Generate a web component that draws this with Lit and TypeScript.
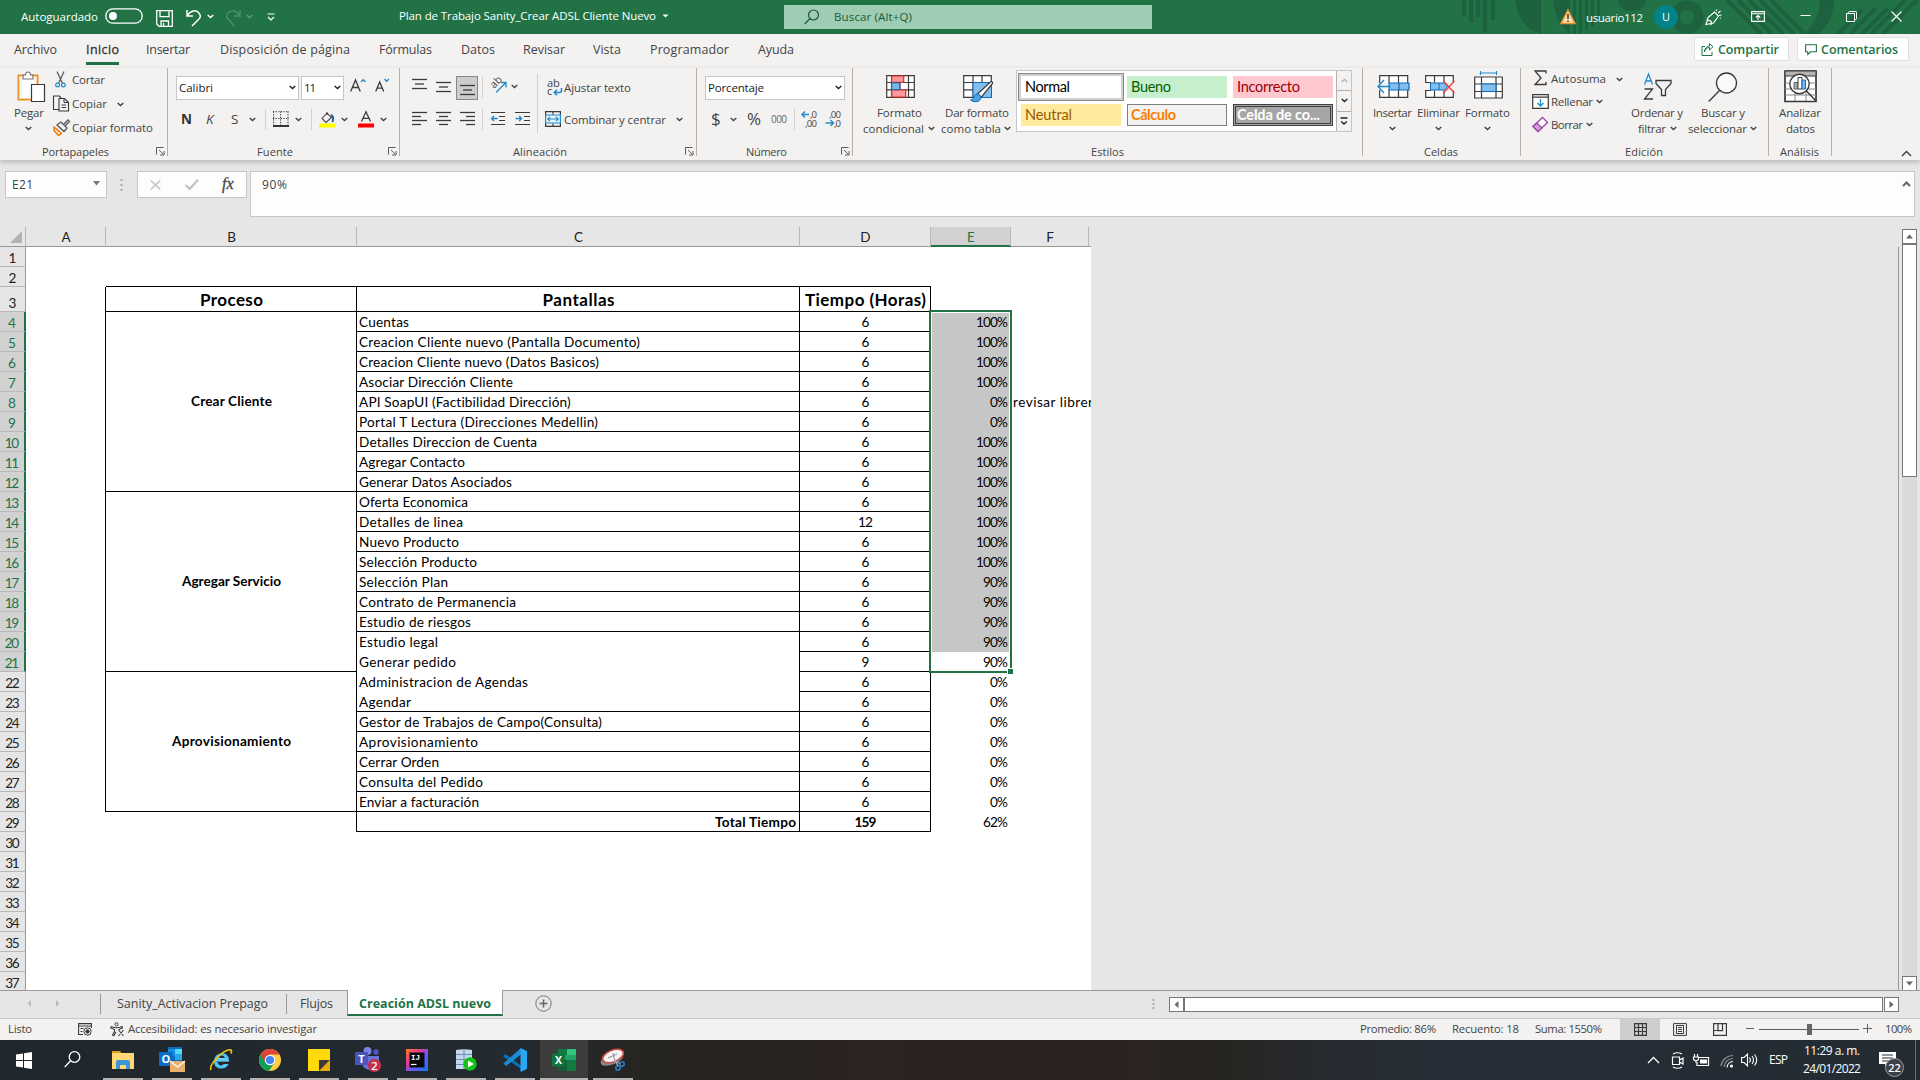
import { LitElement, html, svg, css, nothing, TemplateResult } from "lit";
import { customElement, property } from "lit/decorators.js";

/* Text label that adjusts its tracking so that it fills a given width. */
@customElement("fit-label")
class FitLabel extends LitElement {
  @property({ type: Number }) w = 0;
  @property() text = "";
  static styles = css`
    :host { display: inline-block; white-space: pre; flex: none; }
    .ink { display: inline-block; }
  `;
  render() {
    return html`<span class="ink">${this.text}</span>`;
  }
  updated() {
    const ink = this.renderRoot.querySelector(".ink") as HTMLElement;
    if (!this.w) return;
    this.style.width = this.w + "px";
    ink.style.letterSpacing = "0";
    const natural = ink.getBoundingClientRect().width;
    const n = Math.max(1, this.text.length - 1);
    ink.style.letterSpacing = ((this.w - natural) / n).toFixed(3) + "px";
  }
}

type Item = [x: number, w: number, content: unknown, dy?: number];

const t = (text: string, w = 0, cls = "") => html`<fit-label class=${cls} .text=${text} .w=${w}></fit-label>`;

/* One horizontal run of controls; every item starts at its own x. */
const row = (origin: number, h: number, items: Item[], cls = "") => {
  let at = origin;
  return html`<div class="row ${cls}" style="height:${h}px">
    ${items.map(([x, w, content, dy]) => {
      const gap = x - at;
      at = x + w;
      return html`<div class="slot" style="margin-left:${gap}px;width:${w}px;${dy ? `margin-top:${dy * 2}px` : ""}">${content}</div>`;
    })}
  </div>`;
};

const ic = (w: number, h: number, body: TemplateResult<2>) =>
  html`<svg class="ic" width=${w} height=${h} viewBox="0 0 ${w} ${h}" fill="none" stroke="#3b3a39">${body}</svg>`;

const chev = (c = "#444") => ic(7, 5, svg`<path d="M.7 1l2.8 2.6L6.3 1" stroke=${c} stroke-width="1.4"/>`);
const launcher = ic(9, 9, svg`<path d="M.5 7.5v-7h7M3 3l4.5 4.5M8 4v4H4" stroke="#605e5c"/>`);
const vsep = (h: number) => html`<div class="vsep" style="height:${h}px"></div>`;
const lines = (xs: [number, number][], gap: number) =>
  ic(15, 15, svg`${xs.map(([a, b], i) => svg`<path d="M${a} ${1.5 + i * gap}H${b}" stroke-width="1.3"/>`)}`);
const sans = "Open Sans, sans-serif";

const I = {
  toggle: ic(38, 16, svg`<rect x=".8" y=".8" width="36.4" height="14.4" rx="7.2" stroke="#fff" stroke-width="1.3"/><circle cx="8" cy="8" r="4" fill="#fff" stroke="none"/>`),
  save: ic(17, 17, svg`<path d="M.7.7h15.6v15.6H3L.7 14zM4 .7v6h9v-6M5 16v-5h7.5v5M7.500 16v-3" stroke="#fff" stroke-width="1.3"/>`),
  undo: ic(16, 18, svg`<path d="M1 1v6h6M1.3 6.5C5 1 10 .8 12.500 3.500c2.500 2.700 2 5 .5 6.500L6 17" stroke="#fff" stroke-width="1.5"/>`),
  redo: ic(16, 18, svg`<path d="M15 1v6H9M14.700 6.500C11 1 6 .8 3.500 3.500 1 6.200 1.500 8.500 3 10l6.500 7" stroke="#5c9a78" stroke-width="1.300" opacity=".75"/>`),
  quick: ic(8, 8, svg`<path d="M.5 1h7M1 4l3 3 3-3" stroke="#fff" stroke-width="1.200"/>`),
  caret: ic(7, 4, svg`<path d="M.5.500h6l-3 3z" fill="#fff" stroke="none"/>`),
  find: ic(16, 16, svg`<circle cx="9.500" cy="6" r="5" stroke="#185c37" stroke-width="1.200"/><path d="M6 9.500L.7 15" stroke="#185c37" stroke-width="1.200"/>`),
  warn: ic(16, 16, svg`<path d="M8 1l7 13.500H1z" fill="#ffe0a8" stroke="#e8912d" stroke-width="1.500"/><path d="M8 5v5M8 11.500v1.500" stroke="#333" stroke-width="1.500"/>`),
  pen: ic(17, 17, svg`<path d="M1 15.500l2-7L9.500 3l4 4-5 7zM1.500 12.500c3-3 7 1 4 3.500M11 2l1-1.500M13 4l2.500-2M14 6.500l2.500-.5M15 9h1" stroke="#fff" stroke-width="1.200"/>`),
  ribbonOpt: ic(14, 11, svg`<path d="M.6.600h12.800v9.800H.600zM.6 2.800h12.800M7 9V4.500M4.800 6.500L7 4.400l2.200 2.100" stroke="#fff" stroke-width="1.100"/>`),
  min: ic(11, 11, svg`<path d="M.5 4.500h10" stroke="#fff"/>`),
  restore: ic(11, 11, svg`<path d="M.5 2.500h8v8h-8zM2.500 2.500v-1q0-1 1-1h6q1 0 1 1v6q0 1-1 1h-1" stroke="#fff"/>`),
  close: ic(11, 11, svg`<path d="M.5.500l10 10M10.500.500l-10 10" stroke="#fff" stroke-width="1.100"/>`),
  share: ic(13, 13, svg`<path d="M4 3.500H1v9h10V9M3.500 9c.5-3 2.500-4.500 5-4.500V7L12 3.700 8.500.700V3C5.500 3.200 3.500 5.500 3.500 9z" stroke="#217346"/>`),
  comment: ic(12, 12, svg`<path d="M.6.800h10.800v7H5.500L2.800 10.500V7.800H.600z" stroke="#217346" stroke-width="1.100"/>`),

  paste: ic(28, 32, svg`<path d="M1.500 4.500h19v24h-19z" fill="#fbf3e6" stroke="#e8912d" stroke-width="2"/><path d="M2.500 5.500h17v22h-17z" stroke="#fbd9a5"/><path d="M5 6.500h12V27H5z" fill="#fff" stroke="none"/><path d="M6 8V4h2.500c0-4 5-4 5 0H16v4z" fill="#fff" stroke="#777" stroke-width="1.200"/><path d="M14.500 13.500h13v17h-13z" fill="#fff" stroke-width="1.200"/>`),
  cut: ic(11, 17, svg`<path d="M2 .500l5.500 12M9 .500l-5.500 12" stroke="#605e5c" stroke-width="1.300"/><circle cx="2.600" cy="14" r="1.900" stroke="#1e8bcd" stroke-width="1.200"/><circle cx="8.400" cy="14" r="1.900" stroke="#1e8bcd" stroke-width="1.200"/>`),
  copy: ic(17, 17, svg`<path d="M5.500 14.500h-5V1h5.800l2 2M6 3.500h5.500l4 4V16H6z" stroke-width="1.100"/><path d="M11 3.500v4h4.500M8.500 10h4.500M8.500 12.500h4.500"/>`),
  painter: ic(17, 17, svg`<path d="M1 8l7.500 6.500L5.500 16.500 1 11.500z" fill="#fde8cf" stroke="#e8760c" stroke-width="1.400"/><path d="M4 6l4-3 6 6-3 3.500zM11 5l4-4 1.500 1.500-4 4" fill="#f3f2f1" stroke="#555" stroke-width="1.300"/>`),
  growA: ic(16, 15, svg`<path d="M.7 13.500L5.500 2l4.800 11.500M2.300 9.500h6.400" stroke-width="1.300"/><path d="M11 4l2.200-2.300L15.400 4" stroke="#1e8bcd" stroke-width="1.300"/>`),
  shrinkA: ic(15, 15, svg`<path d="M.7 13.500L4.700 4l4 9.500M2 10.200h5.400" stroke-width="1.300"/><path d="M9.500 1l2.200 2.300L13.900 1" stroke="#1e8bcd" stroke-width="1.300"/>`),
  borders: ic(16, 16, svg`<path d="M.6.500v14M7.600.500v14M15 .500v14M0 .700h16M0 7.500h16" stroke-dasharray="1.300 1.300"/><path d="M0 15h16" stroke-width="1.800" stroke="#222"/>`),
  fill: ic(17, 17, svg`<path d="M3 7.500L8 2l4.500 4.500-5.500 5zM8 4V1" stroke="#444" stroke-width="1.100" fill="#f3f2f1"/><path d="M12 4c2 1 2.500 4 1.500 7" stroke="#1e5fa8" stroke-width="2"/><path d="M0 12.500h16v4H0z" fill="#ff0" stroke="none"/>`),
  fontColor: ic(17, 17, svg`<path d="M3.500 10.500L8 .7l4.500 9.800M5 7.300h6" stroke-width="1.300"/><path d="M0 12.500h16v4H0z" fill="#f00" stroke="none"/>`),
  orient: ic(18, 17, svg`<path d="M6 15.500l9.500-9.500M11 5.500h5v5" stroke="#1e8bcd" stroke-width="1.300"/><text transform="translate(4 12) rotate(-45)" font-size="10.500" fill="#444" stroke="none" font-family=${sans}>ab</text>`),
  wrap: html`<span class="abc"><span>ab</span><span>c</span>${ic(10, 9, svg`<path d="M8.500 0v2.500q0 2-2 2H1.500M4 1.800L1.300 4.500 4 7.200" stroke="#1e8bcd" stroke-width="1.600"/>`)}</span>`,
  merge: ic(16, 16, svg`<path d="M.6.600h14.800v14.800H.600zM8 .600v3M8 12.400v3" stroke-width="1.200"/><path d="M.6 4h14.800v8H.600z" stroke="#1e8bcd" fill="#e8f3fb" stroke-width="1.200"/><path d="M2.500 8h11M5 5.800L2.800 8 5 10.200M11 5.800L13.200 8 11 10.200" stroke="#1e8bcd" stroke-width="1.200"/>`),
  outdent: ic(16, 15, svg`<path d="M0 1.500h14M8 5.500h6M8 9.500h6M0 13.500h14" stroke-width="1.200"/><path d="M.7 7.500h6M3 5L.7 7.500 3 10" stroke="#1e8bcd" stroke-width="1.400"/>`),
  indent: ic(16, 15, svg`<path d="M0 1.500h15M9 5.500h6M9 9.500h6M0 13.500h15" stroke-width="1.200"/><path d="M.5 7.500h6M4.200 5l2.300 2.500L4.200 10" stroke="#1e8bcd" stroke-width="1.400"/>`),
  incDec: ic(17, 17, svg`<path d="M1 4.500h7M4 1.500L1 4.500l3 3" stroke="#1e8bcd" stroke-width="1.400"/><text x="16" y="8" font-size="9.500" fill="#444" stroke="none" text-anchor="end" textLength="7" font-family=${sans}>,0</text><text x="16" y="16.500" font-size="9.500" fill="#444" stroke="none" text-anchor="end" textLength="12" font-family=${sans}>,00</text>`),
  decDec: ic(17, 17, svg`<path d="M.5 13h8M5.500 10l3 3-3 3" stroke="#1e8bcd" stroke-width="1.400"/><text x="16" y="8" font-size="9.500" fill="#444" stroke="none" text-anchor="end" textLength="12" font-family=${sans}>,00</text><text x="16" y="16.500" font-size="9.500" fill="#444" stroke="none" text-anchor="end" textLength="7" font-family=${sans}>,0</text>`),

  cond: ic(29, 23, svg`<path d="M.7.700h27.600v21.600H.700zM.7 7.500h27.600M.7 14.800h27.600M5.500.700v21.600M14 .700v21.600M22.500.700v21.600" fill="#fff" stroke-width="1.200"/><path d="M5.700 1h12v6.400h-12zM5.700 15h14v7h-14z" fill="#ff9a9a" stroke="#d92b2b" stroke-width="1.200"/><path d="M5.700 8h8v6.500h-8z" fill="#7ab8ea" stroke="#0f6cbd"/>`),
  tableFmt: ic(31, 28, svg`<path d="M.7.700h27.600v21.600H.700zM.7 7.500h27.600M.7 14.800h27.600M10 .700v21.600M19 .700v21.600" fill="#fff" stroke-width="1.200"/><path d="M10 7.500h18.500v15H10z" fill="#83beec" stroke="#0f6cbd"/><path d="M14.500 19L28 6.500q2 0 1.500 2L18.500 22z" fill="#fff" stroke-width="1.200"/><path d="M7.500 25c4 0 3-6 7-6s5 7-1 7.700q-4 .3-6-1.700z" fill="#4da3e0" stroke="#0f6cbd"/>`),
  insert: ic(33, 23, svg`<path d="M2.700.700h28v21.600h-28zM12 .700v21.600M21.500.700v21.600" fill="#fff" stroke-width="1.200"/><path d="M0 8h34v7H0z" fill="#f3f2f1" stroke="none"/><path d="M12 8h20v7H12zM22 8v7" fill="#83beec" stroke="#0f6cbd" stroke-width="1.200"/><path d="M13.500 11.500H1.500M7 5l-6 6.500L7 18" stroke="#1e8bcd" stroke-width="1.400"/>`),
  remove: ic(31, 23, svg`<path d="M.7.700h27.600v21.600H.700zM9.500.700v21.600M19 .700v21.600" fill="#fff" stroke-width="1.200"/><path d="M0 7.500h31v8H0z" fill="#f3f2f1" stroke="none"/><path d="M0 7.500h6M0 15.500h6"/><path d="M5.500 8h14l3 3.500-3 3.500h-14zM14 8v7" fill="#83beec" stroke="#0f6cbd"/><path d="M18.500 6l11 12M29.500 6l-11 12" stroke="#e8484a" stroke-width="1.400"/>`),
  format: ic(29, 28, svg`<path d="M.7 6h27.600v21H.700zM.7 13h27.600M.7 20.500h27.600M7.500 6v21M22 6v21" fill="#fff" stroke-width="1.200"/><path d="M7.500 13H22v7.500H7.500z" fill="#83beec" stroke="#0f6cbd" stroke-width="1.200"/><path d="M6.500 0v4M22.500 0v4M6.500 2h16" stroke="#1e8bcd" stroke-width="1.200"/>`),
  sigma: ic(13, 16, svg`<path d="M12 3.500V1H1l6 7-6 6.500h11V12" stroke-width="1.300"/>`),
  fillDown: ic(17, 15, svg`<path d="M.7.700h15.600v13.600H.700zM.7 3.200h15.600" stroke-width="1.200" fill="#fff"/><path d="M8.500 5v7M5.500 9l3 3 3-3" stroke="#1e8bcd" stroke-width="1.300"/>`),
  eraser: ic(17, 17, svg`<path d="M1 10.500L10.500 1.500l5 5L6 15.500z" fill="#fff" stroke="#9b45a8" stroke-width="1.300"/><path d="M1 10.500L5 7l5 5-4 3.500z" fill="#d69cdc" stroke="#9b45a8" stroke-width="1.200"/>`),
  sort: ic(30, 28, svg`<path d="M1.500 11.500L5.500 1l4 10.500M2.800 8h5.400" stroke="#1e8bcd" stroke-width="1.300"/><path d="M1.500 16h8l-8 10h8.500M13 7.500h15v3l-5.500 6v6h-4v-6l-5.500-6z" stroke-width="1.300"/>`),
  search: ic(30, 30, svg`<circle cx="18.500" cy="11" r="10" stroke-width="1.300" fill="#f9f9f9"/><path d="M11.500 18.500L.7 29.500" stroke-width="1.300"/>`),
  analyze: ic(33, 33, svg`<path d="M1 1h31v30.500H1z" fill="#fff" stroke-width="1.700"/><path d="M1 1h31v5H1z" fill="#b5b3b1"/><path d="M1 13h31M1 19h31M1 25h31M11 6v25M22 6v25" stroke="#888"/><circle cx="15.500" cy="14" r="9.700" fill="#fff" stroke-width="1.400"/><path d="M10 12.500h4V19h-4z" fill="#aaa" stroke="#666"/><path d="M14 7.500h4V19h-4z" fill="#fff"/><path d="M18 10h3.500v9H18z" fill="#7ab8ea" stroke="#0f6cbd"/><path d="M22.500 21l9.500 10" stroke-width="1.500"/>`),
  up: ic(11, 7, svg`<path d="M1 6l4.500-4.500L10 6" stroke-width="1.400"/>`),
};

const tri = (d: string, c = "#666") => ic(9, 9, svg`<path d=${d} fill=${c} stroke="none"/>`);

interface SheetRow { n: number; name: string; w: number; hours: string; pct: string; open?: boolean }
const raw: [string, number, string, string, boolean?][] = [
  ["Cuentas", 50, "6", "100%"],
  ["Creacion Cliente nuevo (Pantalla Documento)", 281, "6", "100%"],
  ["Creacion Cliente nuevo (Datos Basicos)", 240, "6", "100%"],
  ["Asociar Dirección Cliente", 154, "6", "100%"],
  ["API SoapUI (Factibilidad Dirección)", 212, "6", "0%"],
  ["Portal T Lectura (Direcciones Medellin)", 239, "6", "0%"],
  ["Detalles Direccion de Cuenta", 178, "6", "100%"],
  ["Agregar Contacto", 106, "6", "100%"],
  ["Generar Datos Asociados", 153, "6", "100%"],
  ["Oferta Economica", 109, "6", "100%"],
  ["Detalles de linea", 104, "12", "100%"],
  ["Nuevo Producto", 100, "6", "100%"],
  ["Selección Producto", 118, "6", "100%"],
  ["Selección Plan", 89, "6", "90%"],
  ["Contrato de Permanencia", 157, "6", "90%"],
  ["Estudio de riesgos", 112, "6", "90%"],
  ["Estudio legal", 79, "6", "90%", true],
  ["Generar pedido", 97, "9", "90%", true],
  ["Administracion de Agendas", 169, "6", "0%", true],
  ["Agendar", 52, "6", "0%"],
  ["Gestor de Trabajos de Campo(Consulta)", 243, "6", "0%"],
  ["Aprovisionamiento", 119, "6", "0%"],
  ["Cerrar Orden", 80, "6", "0%"],
  ["Consulta del Pedido", 124, "6", "0%"],
  ["Enviar a facturación", 120, "6", "0%"],
];
const rows: SheetRow[] = raw.map(([name, w, hours, pct, open], i) => ({ n: i + 4, name, w, hours, pct, open }));
const pctW: Record<string, number> = { "100%": 32, "90%": 25, "0%": 18, "62%": 25 };

const place = (col: number, r: number, span = 1) => `grid-column:${col};grid-row:${r + 1} / span ${span}`;

@customElement("app-root")
class AppRoot extends LitElement {
  static styles = css`
    :host { display: block; width: 1920px; height: 1080px; overflow: hidden; background: #e6e6e6;
      font: 11.500px/16px "Open Sans", "Noto Sans", sans-serif; color: #444; }
    * { box-sizing: border-box; }
    .row { display: flex; align-items: center; flex: none; }
    .slot { flex: none; display: flex; align-items: center; white-space: nowrap; }
    .ic { display: block; flex: none; overflow: visible; }
    .b { font-weight: 700; }

    .title { position: relative; background: #217346; color: #fff; height: 34px; }
    .art { position: absolute; right: 0; top: 0; }
    .title > .row { position: relative; }
    .searchbox { background: #9fcdb4; width: 368px; height: 24px; color: #185c37; }
    .avatar { width: 24px; height: 24px; border-radius: 50%; background: #038387; color: #fff; font-size: 11px;
      display: flex; align-items: center; justify-content: center; }

    .tabs { background: #f3f2f1; height: 34px; font-size: 12.500px; }
    .tab-on { border-bottom: 3px solid #217346; height: 26px; padding-top: 3px; color: #333; margin-top: 2px; -webkit-text-stroke: .3px; }
    .pill { background: #fff; border: 1px solid #e1dfdd; border-radius: 2px; height: 24px; width: 100%; color: #217346; font-weight: 600; padding-top: 1px; }

    .ribbon { display: flex; background: #f3f2f1; height: 92px; position: relative; box-shadow: 0 2px 5px #00000038; }
    .group { flex: none; height: 88px; display: flex; flex-direction: column; border-right: 1px solid #b3b0ad; }
    .group .body { flex: none; height: 76px; }
    .group .foot { height: 12px; line-height: 14px; font-size: 11px; }
    .split { display: flex; }
    .stack { display: flex; flex-direction: column; flex: none; }
    .pad8 { padding-top: 7px; }
    .gap7 { margin-top: 7px; }
    .vsep { width: 1px; background: #d2d0ce; }
    .box { background: #fff; border: 1px solid #c8c6c4; height: 24px; width: 100%; color: #222; }
    .pressed { width: 22px; height: 24px; background: #cfcdcb; border: 1px solid #8a8886; display: flex; align-items: flex-end; justify-content: center; }
    .n { font-weight: 700; font-size: 13.500px; color: #333; }
    .k { font-style: italic; font-size: 13.500px; }
    .s { text-decoration: underline; font-size: 13.500px; }
    .sym { font-size: 17px; line-height: 20px; }
    .zeros { font-size: 10px; color: #666; }
    .abc { position: relative; display: flex; flex-direction: column; width: 15px; height: 17px; font-size: 11px; line-height: 8px; }
    .abc .ic { position: absolute; left: 6px; top: 9px; }

    .gallery { display: flex; width: 336px; height: 62px; border: 1px solid #c8c6c4; background: #fff; }
    .styles { display: grid; grid-template-columns: 100px 100px 100px; column-gap: 6px; row-gap: 6px; padding: 5px 0 0 4px; width: 320px; grid-auto-rows: 22px;
      font: 14.500px/20px "Lato", sans-serif; }
    .style { padding: 0 0 1px 4px; display: flex; align-items: center; }
    .normal { outline: 1px solid #8a8886; outline-offset: 2px; box-shadow: 0 0 0 2px #d2d0ce; color: #000; }
    .bueno { background: #c6efce; color: #006100; }
    .incorrecto { background: #ffc7ce; color: #9c0006; }
    .neutral { background: #ffeb9c; color: #9c5700; }
    .calculo { background: #f2f2f2; border: 1px solid #7f7f7f; color: #fa7d00; font-weight: 700; padding-left: 3px; }
    .celda { background: #a5a5a5; border: 3px double #3f3f3f; color: #fff; font-weight: 700; padding-left: 1px; }
    .spin { display: flex; flex-direction: column; width: 15px; border-left: 1px solid #b3b0ad; background: #f3f2f1; }
    .spin div { display: flex; align-items: center; justify-content: center; flex: 1; border-bottom: 1px solid #b3b0ad; }
    .spin div:last-child { border: 0; }

    .formula { height: 67px; padding-top: 11px; font-size: 12px; }
    .fbox { background: #fdfdfd; border: 1px solid #c6c6c6; width: 100%; height: 27px; }
    .formula > .row { align-items: flex-start; }
    .fx { font: italic 400 16px/16px "Liberation Serif", serif; color: #444; -webkit-text-stroke: .3px; }
    .tall { height: 46px; }

    .work { display: flex; height: 763px; }
    .sheet { position: relative; flex: none; width: 1091px; height: 763px; overflow: hidden; background: #fff; display: grid;
      grid-template-columns: 26px 80px 251px 443px 131px 80px 78px 2px;
      grid-template-rows: 20px 20px 20px 25px repeat(34, 20px);
      font: 13.600px/20px "Lato", "Open Sans", sans-serif; color: #000; }
    .hd { background: #e6e6e6; border-bottom: 1px solid #999; border-right: 1px solid #b8b8b8; display: flex; justify-content: center; color: #222; line-height: 20px; padding-left: 1px; font-size: 13.500px; }
    .hd.plain { border-right: 0; }
    .hd.on { background: #d2d2d2; color: #217346; border-bottom: 2px solid #217346; }
    .hd.corner { justify-content: flex-end; align-items: flex-end; padding: 0 3px 3px 0; }
    .rh { background: #e6e6e6; border-right: 1px solid #999; border-bottom: 1px solid #b8b8b8; display: flex; align-items: flex-end; justify-content: center; color: #222; }
    .rh fit-label { margin-bottom: -2px; }
    .rh.on { background: #d2d2d2; color: #217346; border-right: 2px solid #217346; }
    .cell { display: flex; white-space: nowrap; min-width: 0; }
    .mid { justify-content: center; padding-left: 1px; }
    .tallcell { align-items: center; padding-bottom: 2px; }
    .end { justify-content: flex-end; padding-right: 3px; }
    .start { padding-left: 2px; }
    .br { border-right: 1px solid #000; }
    .bb { border-bottom: 1px solid #000; }
    .grey { background: #c6c6c6; }
    .big { font-size: 17px; font-weight: 700; line-height: 26px; }
    .sel { position: absolute; left: 929px; top: 83px; width: 83px; height: 363px; border: 2px solid #217346; box-shadow: inset 0 0 0 1px #fff; }
    .knob { position: absolute; right: -4px; bottom: -4px; width: 7px; height: 7px; background: #217346; border: 1px solid #fff; }
    .void { flex: none; width: 808px; }
    .void .blank { height: 743px; margin-top: 20px; border-right: 1px solid #999; width: 808px; }
    .vbar { width: 21px; padding: 2px 3px 0 3px; display: flex; flex-direction: column; }
    .btn { background: #fff; border: 1px solid #777; width: 15px; height: 15px; display: flex; align-items: center; justify-content: center; flex: none; }
    .vthumb { background: #fff; border: 1px solid #777; width: 15px; height: 233px; flex: none; }
    .vtrack { background: #dadada; width: 15px; height: 499px; flex: none; }
    .vbar .btn:last-child { position: relative; }

    .sheets { height: 28px; border-top: 1px solid #999; font-size: 12.500px; position: relative; }
    .sheets > .row { margin-top: -1px; }
    .tabnow { width: 100%; height: 26px; background: #fff; border: 1px solid #999; border-top: 0; border-bottom: 2px solid #217346; margin-top: -1px;
      padding-top: 3px; display: flex; align-items: center; justify-content: center; color: #217346; font-weight: 700; }
    .hthumb { background: #fff; border: 1px solid #777; height: 15px; width: 100%; }

    .status { height: 22px; background: #f3f2f1; border-top: 1px solid #c6c6c6; font-size: 11.300px; }
    .status fit-label { margin-top: -2px; }
    .view { width: 40px; height: 21px; background: #cfcecd; display: flex; align-items: center; justify-content: center; padding-bottom: 1px; }
    .rail { position: relative; width: 100px; height: 1px; background: #605e5c; }
    .rail::after { content: ""; position: absolute; left: 48px; top: -5px; width: 5px; height: 11px; background: #666; }

    .taskbar { position: relative; height: 40px; color: #fff; font-size: 12px;
      background: linear-gradient(90deg, #1f272c 0, #232a30 520px, #26241f 660px, #2b2321 900px, #2b2322 1130px, #262420 1210px, #272b31 1340px, #252e36 1440px, #232c33 100%); }
    .app { height: 40px; width: 100%; display: flex; flex-direction: column; align-items: center; justify-content: space-between; }
    .app .pic { flex: 1; display: flex; align-items: center; padding-top: 2px; }
    .app.open::after { content: ""; width: 40px; height: 2px; background: #b5b3b1; }
    .app.now { background: #3c3c3b; }
    .app.now::after { width: 48px; }
    .clock { display: flex; flex-direction: column; line-height: 18px; align-items: center; width: 60px; }
    .edge { width: 1px; height: 40px; background: #6d7276; }
    .note { position: relative; width: 34px; height: 28px; }
    .count { position: absolute; left: 6px; top: 6px; width: 19px; height: 19px; border-radius: 50%; background: #3c4248; border: 1px solid #9a9da0;
      font-size: 11px; line-height: 17px; text-align: center; font-weight: 600; }
  `;

  private titleBar() {
    return html`<header class="title">
      <svg class="art" width="470" height="34" viewBox="1450 0 470 34" fill="#1e613f">
        <path d="M1462 0h4v16h-4zM1469 0h4v23h-4zM1476 0h4v17h-4zM1483 0h4v32h-4zM1491 0h4v20h-4zM1515 0h26v34q-22-6-26-34zM1573 0h3v34h-3zM1579 0h3v34h-3zM1585 0h3v30h-3zM1591 0h3v26h-3zM1597 0h3v22h-3z"/>
        <path d="M1553 0h17v34q-14-10-17-34zM1618 0h28q-2 11-14 11t-14-11z"/>
        <circle cx="1687" cy="17" r="12" fill="none" stroke="#1e613f" stroke-width="9"/>
        <path d="M1727 0l34 34M1738 0l34 34M1749 0l34 34M1760 0l34 34M1771 0l34 34M1862 10l-24 24M1876 8l-26 26M1888 8l-26 26M1905 0l-34 34M1917 0l-34 34" stroke="#1e613f" stroke-width="4"/>
        <path d="M1820 0h14q0 22-16 34h-15q16-12 17-34z"/>
      </svg>
      ${row(0, 34, [
        [21, 77, t("Autoguardado", 77)], [105, 38, I.toggle, -1], [156, 17, I.save, 1], [186, 16, I.undo, 1], [207, 7, chev("#fff"), -1],
        [225, 16, I.redo, 1], [246, 7, chev("#5c9a78"), -1], [267, 8, I.quick], [399, 257, t("Plan de Trabajo Sanity_Crear ADSL Cliente Nuevo", 257), -1], [662, 7, I.caret, -1],
        [784, 368, html`<div class="searchbox">${row(784, 24, [[804, 16, I.find], [834, 78, t("Buscar (Alt+Q)", 78)]])}</div>`],
        [1560, 16, I.warn], [1586, 57, t("usuario112", 57), 1], [1654, 24, html`<div class="avatar">U</div>`], [1705, 17, I.pen], [1751, 14, I.ribbonOpt, -1],
        [1800, 11, I.min, -1], [1846, 11, I.restore, -1], [1891, 11, I.close, -1],
      ])}
    </header>`;
  }

  private tabs() {
    return html`<nav class="tabs">${row(0, 31, [
      [14, 43, t("Archivo", 43)], [86, 33, html`<div class="tab-on">${t("Inicio", 33)}</div>`, 1], [146, 44, t("Insertar", 44)], [220, 130, t("Disposición de página", 130)],
      [379, 53, t("Fórmulas", 53)], [461, 34, t("Datos", 34)], [523, 42, t("Revisar", 42)], [593, 28, t("Vista", 28)], [650, 79, t("Programador", 79)], [758, 36, t("Ayuda", 36)],
      [1694, 95, html`<div class="pill">${row(1695, 22, [[1701, 13, I.share], [1718, 61, t("Compartir", 61)]])}</div>`, -1],
      [1797, 112, html`<div class="pill">${row(1798, 22, [[1805, 12, I.comment], [1821, 77, t("Comentarios", 77)]])}</div>`, -1],
    ])}</nav>`;
  }

  private group(x0: number, x1: number, body: unknown, foot: Item[]) {
    return html`<section class="group" style="width:${x1 - x0}px"><div class="body">${body}</div>${row(x0, 15, foot, "foot")}</section>`;
  }

  private ribbon() {
    const L = (x: number): Item => [x, 9, launcher];
    return html`<div class="ribbon">
      ${this.group(0, 168, html`<div class="split">
        <div class="stack" style="width:52px">
          ${row(0, 37, [[17, 28, I.paste]])}${row(0, 16, [[14, 30, t("Pegar", 30)]])}${row(0, 14, [[25, 7, chev()]])}
        </div>
        <div class="stack">
          ${row(52, 24, [[55, 11, I.cut, -1], [72, 33, t("Cortar", 33)]])}
          ${row(52, 24, [[53, 17, I.copy, -1], [72, 35, t("Copiar", 35)], [117, 7, chev()]])}
          ${row(52, 24, [[53, 17, I.painter, -1], [72, 81, t("Copiar formato", 81)]])}
        </div></div>`, [[42, 67, t("Portapapeles", 67)], L(156)])}
      ${this.group(168, 400, html`<div class="pad8">
        ${row(168, 25, [
          [176, 123, html`<div class="box">${row(177, 22, [[179, 34, t("Calibri", 34)], [289, 7, chev("#222")]])}</div>`],
          [301, 43, html`<div class="box">${row(302, 22, [[304, 13, t("11", 12)], [334, 7, chev("#222")]])}</div>`],
          [350, 16, I.growA, -2], [375, 15, I.shrinkA, -2]])}
        ${row(168, 25, [
          [181, 11, t("N", 0, "n"), -1], [206, 9, t("K", 0, "k"), -1], [231, 9, t("S", 0, "s"), -1], [249, 7, chev()], [265, 1, vsep(21)],
          [273, 16, I.borders, -1], [295, 7, chev()], [311, 1, vsep(21)], [319, 17, I.fill], [341, 7, chev()], [358, 17, I.fontColor], [380, 7, chev()]], "gap7")}
      </div>`, [[257, 36, t("Fuente", 36)], L(388)])}
      ${this.group(400, 697, html`<div class="split">
        <div class="stack pad8">
          ${row(400, 25, [
            [412, 15, lines([[0, 15], [3, 12], [0, 15]], 4.500), -2], [436, 15, lines([[0, 15], [3, 12], [0, 15]], 4.500), 1],
            [456, 22, html`<div class="pressed">${lines([[0, 15], [3, 12], [0, 15]], 4.500)}</div>`],
            [482, 1, vsep(21)], [490, 18, I.orient, -2], [511, 7, chev(), -1], [531, 1, nothing]])}
          ${row(400, 25, [
            [412, 15, lines([[0, 15], [0, 9], [0, 15], [0, 9]], 4), -1], [436, 15, lines([[0, 15], [3, 12], [0, 15], [3, 12]], 4), -1], [460, 15, lines([[0, 15], [6, 15], [0, 15], [6, 15]], 4), -1],
            [482, 1, vsep(21)], [491, 16, I.outdent, -1], [515, 16, I.indent, -1]], "gap7")}
        </div>
        <div class="stack" style="width:6px">${row(532, 70, [[537, 1, vsep(59)]])}</div>
        <div class="stack pad8">
          ${row(538, 25, [[547, 15, I.wrap], [564, 67, t("Ajustar texto", 67)]])}
          ${row(538, 25, [[545, 16, I.merge, -1], [564, 102, t("Combinar y centrar", 102)], [676, 7, chev()]], "gap7")}
        </div></div>`, [[513, 54, t("Alineación", 54)], L(685)])}
      ${this.group(697, 853, html`<div class="pad8">
        ${row(697, 25, [[705, 140, html`<div class="box">${row(706, 22, [[708, 56, t("Porcentaje", 56)], [835, 7, chev("#222")]])}</div>`]])}
        ${row(697, 25, [[711, 10, t("$", 9, "sym"), -1], [730, 7, chev()], [747, 16, t("%", 16, "sym"), -1], [771, 17, t("000", 16, "zeros"), -1], [794, 1, vsep(21)], [801, 17, I.incDec, -1], [825, 17, I.decDec, -1]], "gap7")}
      </div>`, [[746, 41, t("Número", 41)], L(841)])}
      ${this.group(853, 1363, html`<div class="split">
        <div class="stack" style="width:86px">${row(853, 37, [[886, 29, I.cond]])}${row(853, 16, [[877, 45, t("Formato", 45)]])}${row(853, 16, [[863, 62, t("condicional", 61)], [928, 7, chev(), -1]])}</div>
        <div class="stack" style="width:77px">${row(939, 37, [[963, 31, I.tableFmt, 2]])}${row(939, 16, [[945, 64, t("Dar formato", 64)]])}${row(939, 16, [[941, 60, t("como tabla", 60)], [1004, 7, chev(), -1]])}</div>
        <div class="stack" style="padding-top:2px">
          <div class="gallery"><div class="styles">
            <div class="style normal">${t("Normal", 45)}</div><div class="style bueno">${t("Bueno", 40)}</div><div class="style incorrecto">${t("Incorrecto", 63)}</div>
            <div class="style neutral">${t("Neutral", 47)}</div><div class="style calculo">${t("Cálculo", 45)}</div><div class="style celda">${t("Celda de co...", 83)}</div>
          </div><div class="spin"><div>${ic(7, 5, svg`<path d="M.7 4l2.800-2.600L6.300 4" stroke="#b3b0ad" stroke-width="1.300"/>`)}</div><div>${chev("#222")}</div>
            <div>${ic(8, 9, svg`<path d="M.5 1h7M1.200 4.500L4 7.100l2.800-2.600" stroke="#222" stroke-width="1.300"/>`)}</div></div></div>
        </div></div>`, [[1091, 33, t("Estilos", 33)]])}
      ${this.group(1363, 1521, html`
        ${row(1363, 37, [[1377, 33, I.insert], [1425, 31, I.remove], [1474, 29, I.format, -2]])}
        ${row(1363, 16, [[1373, 39, t("Insertar", 39)], [1417, 43, t("Eliminar", 43)], [1465, 45, t("Formato", 45)]])}
        ${row(1363, 15, [[1389, 7, chev()], [1435, 7, chev()], [1484, 7, chev()]])}`, [[1424, 34, t("Celdas", 34)]])}
      ${this.group(1521, 1769, html`<div class="split">
        <div class="stack" style="width:106px">
          ${row(1521, 22, [[1534, 13, I.sigma, -1], [1551, 55, t("Autosuma", 55)], [1616, 7, chev()]])}
          ${row(1521, 24, [[1532, 17, I.fillDown, -1], [1551, 42, t("Rellenar", 42)], [1596, 7, chev(), -1]])}
          ${row(1521, 22, [[1532, 17, I.eraser, -1], [1551, 32, t("Borrar", 32)], [1586, 7, chev(), -1]])}
        </div>
        <div class="stack" style="width:58px">${row(1627, 37, [[1643, 30, I.sort]])}${row(1627, 16, [[1631, 52, t("Ordenar y", 52)]])}${row(1627, 16, [[1638, 29, t("filtrar", 28)], [1670, 7, chev(), -1]])}</div>
        <div class="stack">${row(1685, 37, [[1708, 30, I.search]])}${row(1685, 16, [[1701, 44, t("Buscar y", 44)]])}${row(1685, 16, [[1688, 59, t("seleccionar", 59)], [1750, 7, chev(), -1]])}</div>
        </div>`, [[1625, 38, t("Edición", 38)]])}
      ${this.group(1769, 1832, html`
        ${row(1769, 37, [[1784, 33, I.analyze]])}${row(1769, 16, [[1779, 42, t("Analizar", 42)]])}${row(1769, 16, [[1786, 29, t("datos", 29)]])}`, [[1780, 39, t("Análisis", 39)]])}
      <div class="stack">${row(1832, 170, [[1901, 11, I.up]])}</div>
    </div>`;
  }

  private formulaBar() {
    return html`<div class="formula">${row(0, 46, [
      [5, 102, html`<div class="fbox">${row(6, 25, [[12, 21, t("E21", 21)], [92, 9, tri("M1 2h7L4.500 6.500z", "#777"), -1]])}</div>`],
      [120, 3, ic(3, 27, svg`<path d="M1.500 8v2M1.500 13v2M1.500 18v2" stroke="#aaa" stroke-width="2"/>`)],
      [137, 110, html`<div class="fbox">${row(138, 25, [
        [150, 11, ic(11, 10, svg`<path d="M.7.500l9.600 9M10.300.500L.7 9.500" stroke="#c2c2c2" stroke-width="1.600"/>`)],
        [185, 14, ic(14, 11, svg`<path d="M.7 6l4 4L13 .700" stroke="#c2c2c2" stroke-width="2.200"/>`)],
        [222, 14, html`<span class="fx">fx</span>`, -1]])}</div>`],
      [250, 1665, html`<div class="fbox tall">${row(251, 25, [[262, 25, t("90%", 25)], [1902, 9, ic(9, 6, svg`<path d="M1 5l3.500-3.500L8 5" stroke="#666" stroke-width="2"/>`), -1]])}</div>`],
    ])}</div>`;
  }

  private sheet() {
    const heads: [string, number][] = [["A", 2], ["B", 3], ["C", 4], ["D", 5], ["E", 6], ["F", 7]];
    const merged: [string, number, number, number][] = [["Crear Cliente", 4, 9, 81], ["Agregar Servicio", 13, 9, 99], ["Aprovisionamiento", 22, 7, 119]];
    return html`<div class="work">
      <div class="sheet">
        <div class="hd corner">${ic(12, 12, svg`<path d="M12 0v12H0z" fill="#b2b2b2" stroke="none"/>`)}</div>
        ${heads.map(([h, c]) => html`<div class="hd ${c === 6 ? "on" : ""}" style=${place(c, 0)}>${h}</div>`)}
        <div class="hd plain" style=${place(8, 0)}></div>
        ${Array.from({ length: 37 }, (_, i) => i + 1).map((n) => html`<div class="rh ${n > 3 && n < 22 ? "on" : ""}" style=${place(1, n)}>${t(String(n), n > 9 ? 14.500 : 0)}</div>`)}
        <div class="cell br" style=${place(2, 3, 26)}></div>
        <div class="cell bb" style="grid-column:3 / span 3;grid-row:3"></div>
        <div class="cell mid br bb big" style=${place(3, 3)}>${t("Proceso", 63)}</div>
        <div class="cell mid br bb big" style=${place(4, 3)}>${t("Pantallas", 72)}</div>
        <div class="cell mid br bb big" style=${place(5, 3)}>${t("Tiempo (Horas)", 121)}</div>
        ${merged.map(([name, r, span, w]) => html`<div class="cell mid tallcell br bb b" style=${place(3, r, span)}>${t(name, w)}</div>`)}
        ${rows.map((r) => html`
          <div class="cell start br ${r.open ? "" : "bb"}" style=${place(4, r.n)}>${t(r.name, r.w)}</div>
          <div class="cell mid br bb" style=${place(5, r.n)}>${t(r.hours, r.hours === "12" ? 15 : 0)}</div>
          <div class="cell end ${r.n < 21 ? "grey" : ""}" style=${place(6, r.n)}>${t(r.pct, pctW[r.pct])}</div>`)}
        <div class="cell start" style=${place(7, 8)}>${t("revisar librería", 91)}</div>
        <div class="cell br" style=${place(3, 29)}></div>
        <div class="cell end br bb b" style=${place(4, 29)}>${t("Total Tiempo", 81)}</div>
        <div class="cell mid br bb b" style=${place(5, 29)}>${t("159", 22)}</div>
        <div class="cell end" style=${place(6, 29)}>${t("62%", pctW["62%"])}</div>
        <div class="sel"><div class="knob"></div></div>
      </div>
      <div class="void"><div class="blank"></div></div>
      <div class="vbar"><div class="btn">${tri("M1 6.500h7L4.500 2.500z")}</div><div class="vthumb"></div><div class="vtrack"></div><div class="btn">${tri("M1 2.500h7L4.500 6.500z")}</div></div>
    </div>`;
  }

  private bottom() {
    return html`<div class="sheets">${row(0, 27, [
      [25, 9, tri("M6 1v7L2.500 4.500z", "#bbb")], [53, 9, tri("M3 1v7l3.500-3.500z", "#bbb")], [100, 1, html`<div class="vsep" style="height:20px;background:#999"></div>`],
      [117, 151, t("Sanity_Activacion Prepago", 151)], [286, 1, html`<div class="vsep" style="height:20px;background:#999"></div>`], [300, 33, t("Flujos", 33)],
      [347, 156, html`<div class="tabnow">${t("Creación ADSL nuevo", 132)}</div>`],
      [535, 17, ic(17, 17, svg`<circle cx="8.500" cy="8.500" r="7.700" stroke="#777"/><path d="M8.500 4.500v8M4.500 8.500h8" stroke="#666" stroke-width="1.600"/>`)],
      [1152, 3, ic(3, 12, svg`<path d="M1.500 1v2M1.500 5v2M1.500 9v2" stroke="#aaa" stroke-width="2"/>`)],
      [1169, 15, html`<div class="btn">${tri("M6.500 1v7L2.500 4.500z")}</div>`, 1], [1184, 699, html`<div class="hthumb"></div>`, 1], [1884, 15, html`<div class="btn">${tri("M2.500 1v7l4-3.500z")}</div>`, 1],
    ])}</div>
    <div class="status">${row(0, 21, [
      [8, 24, t("Listo", 24)],
      [78, 14, ic(14, 13, svg`<path d="M5 11.500H.600V.600h12.800V5M.6 3h12.800M2.500 5.500h3M2.500 8.500h2" stroke-width="1.100"/><circle cx="9.500" cy="8.500" r="3.700"/><circle cx="9.500" cy="8.500" r="1.700" fill="#3b3a39"/>`)],
      [110, 15, ic(15, 15, svg`<circle cx="6.500" cy="2.300" r="1.600"/><path d="M1 4.500q5.500 2.500 11 0l.5 1.500-4 1.700M1 4.500L.700 6 4.500 7.500v2L2.500 13l1.300.700L6 10M8.500 8l5 6M13.500 8l-5 6" stroke-width="1.100"/>`)],
      [128, 189, t("Accesibilidad: es necesario investigar", 189)],
      [1360, 76, t("Promedio: 86%", 76)], [1452, 67, t("Recuento: 18", 67)], [1535, 67, t("Suma: 1550%", 67)],
      [1620, 40, html`<div class="view">${ic(13, 13, svg`<path d="M.6.600h11.800v11.800H.600zM4.500.600v11.800M8.500.600v11.800M.6 4.500h11.800M.6 8.500h11.800" stroke-width="1.200"/>`)}</div>`],
      [1673, 14, ic(14, 13, svg`<path d="M.6.600h12.800v11.800H.600zM3.500 2.500h7v8h-7zM5 4.500h4M5 6.500h4M5 8.500h4"/>`), -.5],
      [1713, 14, ic(14, 13, svg`<path d="M.6.600h12.800v11.800H.600zM5 .600v7h4.500v-7M.6 7.500H5" stroke-width="1.200"/>`), -.5],
      [1746, 8, ic(8, 8, svg`<path d="M0 3.500h8" stroke="#605e5c"/>`), -.5], [1759, 100, html`<div class="rail"></div>`, -.5], [1863, 9, ic(9, 9, svg`<path d="M0 4.500h9M4.500 0v9" stroke="#605e5c"/>`), -1],
      [1885, 27, t("100%", 27)],
    ])}</div>`;
  }

  private taskbar() {
    const app = (pic: unknown, cls = "open") => html`<div class="app ${cls}"><div class="pic">${pic}</div></div>`;
    const p = (w: number, h: number, body: TemplateResult<2>) => html`<svg class="ic" width=${w} height=${h} viewBox="0 0 ${w} ${h}" fill="none">${body}</svg>`;
    return html`<footer class="taskbar">${row(0, 40, [
      [16, 16, p(16, 17, svg`<path d="M0 2.500l7-1V8H0zM8 1.300L16 0v8H8zM0 9h7v6.500l-7-1zM8 9h8v8l-8-1.300z" fill="#fff"/>`)],
      [64, 17, p(17, 17, svg`<circle cx="10.500" cy="6" r="5.300" stroke="#fff" stroke-width="1.300"/><path d="M6.700 9.800L.700 16" stroke="#fff" stroke-width="1.300"/>`), -1],
      [103, 40, app(p(22, 20, svg`<path d="M0 1h8l2 3H0z" fill="#e0a21c"/><path d="M0 3h22v16H0z" fill="#ffd873"/><path d="M4 19v-7q0-2 2-2h10q2 0 2 2v7h-4v-4H8v4z" fill="#3a97dc"/>`))],
      [152, 40, app(p(26, 26, svg`<path d="M9 0h14v14H9z" fill="#0f6cbd"/><path d="M9 2h7v7H9z" fill="#1490df"/><path d="M16 2h7v7h-7z" fill="#50d9ff"/><path d="M16 7h7v6h-7z" fill="#28a8ea"/><rect y="5" width="14" height="14" rx="1" fill="#0a6cc4"/><text x="7" y="16" font-size="11" font-weight="700" fill="#fff" text-anchor="middle" font-family=${sans}>O</text><path d="M11 14h15v11H11z" fill="#e9b06e"/><path d="M11 14l7.500 6 7.500-6" stroke="#fff" stroke-width="1.200"/>`))],
      [201, 40, app(p(22, 22, svg`<path d="M4.500 12h14.500C19.500 1 4 2 4 12.500c0 9 12.500 9 14.500 2.500h-5c-1.500 2.500-5.500 1.500-5.500-1.500M8.500 9.500c.5-4 6-4 6.500 0z" fill="#4cc4f5" fill-rule="evenodd"/><path d="M4.500 12h14.500M8.500 9.500h6.500" stroke="#8fe0ff"/><path d="M1 21C-2 16 14 0 20.500.800c1.500.2 1.200 2.200.3 3.700" stroke="#f4c20d" stroke-width="1.700"/>`))],
      [250, 40, app(p(22, 22, svg`<circle cx="11" cy="11" r="11" fill="#ffcd40"/><path d="M11 11L1.500 5.500A11 11 0 0 0 10 22l5-8z" fill="#0f9d58"/><path d="M11 5.500h9.500A11 11 0 0 0 1.500 5.500L6 13z" fill="#db4437"/><circle cx="11" cy="11" r="5.200" fill="#fff"/><circle cx="11" cy="11" r="4.100" fill="#4285f4"/>`))],
      [299, 40, app(p(22, 22, svg`<path d="M0 0h22v11L11 22H0z" fill="#ffd90a"/><path d="M11 11h11L11 22z" fill="#3b3a39"/><path d="M22 11v11H11z" fill="#e5ae0c"/>`))],
      [348, 40, app(p(26, 26, svg`<circle cx="12.500" cy="4" r="4" fill="#7b83eb"/><circle cx="21" cy="5" r="2.700" fill="#5059c9"/><path d="M7 9h17v6q0 7-7 8-8 0-10-6z" fill="#6a72d8"/><rect y="5" width="13" height="13" rx="1" fill="#4b53bc"/><text x="6.500" y="15.500" font-size="11" font-weight="700" fill="#fff" text-anchor="middle" font-family=${sans}>T</text><circle cx="19.500" cy="18.500" r="6.600" fill="#c4314b"/><text x="19.500" y="22.500" font-size="11" font-weight="600" fill="#fff" text-anchor="middle" font-family=${sans}>2</text>`))],
      [397, 40, app(p(22, 22, svg`<defs><linearGradient id="ij" x2="1" y2="1"><stop stop-color="#fe7a1d"/><stop offset=".35" stop-color="#e0398f"/><stop offset=".6" stop-color="#6b57ff"/><stop offset="1" stop-color="#087cfa"/></linearGradient></defs><path d="M0 0h22v22H0z" fill="url(#ij)"/><path d="M3.500 3.500h15v15h-15z" fill="#0a0a0a"/><text x="5" y="11" font-size="7.500" font-weight="700" fill="#fff" font-family="Liberation Mono, monospace">IJ</text><path d="M5 15.500h5.500" stroke="#fff" stroke-width="1.200"/>`))],
      [446, 40, app(p(22, 22, svg`<path d="M1 1q8-1.500 16 0v19H1z" fill="#c5d8ee"/><path d="M1 5.500h16M1 10.500h16M1 15.500h16M9 1v19" stroke="#6f8db3"/><circle cx="15" cy="15" r="6.700" fill="#12c312"/><path d="M13 11.500l6 3.500-6 3.500z" fill="#fff"/>`))],
      [495, 40, app(p(24, 24, svg`<path d="M18 3v18L1.500 9.500 0 8l2.500-2L18 17.500z" fill="#0b70b8"/><path d="M18 0L.500 15.500 3 18 18 6.500z" fill="#1a8bd8"/><path d="M17.500 0L24 3v18l-6.500 3z" fill="#2aa7f2"/>`))],
      [540, 48, app(p(24, 22, svg`<path d="M6 0h18v22H6z" fill="#21a366"/><path d="M6 0h9v6H6z" fill="#107c41"/><path d="M15 0h9v6h-9z" fill="#33c481"/><path d="M6 11h9v11H6z" fill="#185c37"/><path d="M15 11h9v11h-9z" fill="#107c41"/><rect y="4.500" width="13" height="13" rx="1" fill="#0f7540"/><text x="6.500" y="15" font-size="10.500" font-weight="700" fill="#fff" text-anchor="middle" font-family=${sans}>X</text>`), "open now")],
      [593, 40, app(p(24, 22, svg`<ellipse cx="11" cy="10" rx="12" ry="5.500" transform="rotate(-22 11 10)" fill="#888"/><ellipse cx="12" cy="7" rx="11" ry="5.800" transform="rotate(-22 12 7)" fill="#f3f3f3" stroke="#cf4a45" stroke-width="1.600"/><path d="M7 9l9-4M12 4l2 9" stroke="#888"/><circle cx="17" cy="19" r="2.200" stroke="#2a7fc4" stroke-width="1.500"/><circle cx="21" cy="15" r="2.200" stroke="#2a7fc4" stroke-width="1.500"/><path d="M14 11l3 6M13 12l6 2.500" stroke="#9ab" stroke-width="1.300"/>`))],
      [1647, 13, p(13, 8, svg`<path d="M1 7l5.500-5.500L12 7" stroke="#fff" stroke-width="1.300"/>`)],
      [1671, 13, p(13, 17, svg`<path d="M2 2q4.500-2.500 9 0M2 15q4.500 2.500 9 0M1.500 5h7v7.500h-7zM8.500 8l3.500-2v6l-3.500-2" stroke="#fff" stroke-width="1.200"/>`)],
      [1693, 17, p(17, 13, svg`<path d="M5 3.500h10.500v8H4V8" stroke="#fff" stroke-width="1.200"/><path d="M7 5.500h7v4H7z" fill="#fff"/><path d="M1.500 0v2.500M4.500 0v2.500M.5 3h5v2q0 1.500-2.500 1.500T.500 5zM3 6.500V9" stroke="#fff" stroke-width="1.200"/>`)],
      [1720, 14, p(14, 14, svg`<path d="M1 12A12 12 0 0 1 13 1.500M4 13A9 9 0 0 1 13 4.500" stroke="#8b9093" stroke-width="1.200"/><path d="M7 13.500A6.500 6.500 0 0 1 13 7.500" stroke="#fff" stroke-width="1.200"/><circle cx="11.500" cy="12" r="1.600" fill="#fff"/>`), 1],
      [1741, 17, p(17, 14, svg`<path d="M.6 4.500h2.500L6.500 1v12L3.100 9.500H.600zM8.500 4.500q1.800 2.500 0 5M11 3q3 4 0 8M13.500 1.500q4.500 5.500 0 11" stroke="#fff" stroke-width="1.100"/>`)],
      [1769, 19, t("ESP", 19)],
      [1802, 60, html`<div class="clock">${t("11:29 a. m.", 56)}${t("24/01/2022", 58)}</div>`, -.5],
      [1879, 34, html`<div class="note">${p(17, 16, svg`<path d="M0 0h17v12H9l-3 3.500V12H0z" fill="#fff"/><path d="M3 3h11M3 6h11M3 9h8" stroke="#252e36" stroke-width="1.200"/>`)}<div class="count">22</div></div>`, 6],
      [1915, 1, html`<div class="edge"></div>`],
    ])}</footer>`;
  }

  render() {
    return html`${this.titleBar()}${this.tabs()}${this.ribbon()}${this.formulaBar()}${this.sheet()}${this.bottom()}${this.taskbar()}`;
  }
}
